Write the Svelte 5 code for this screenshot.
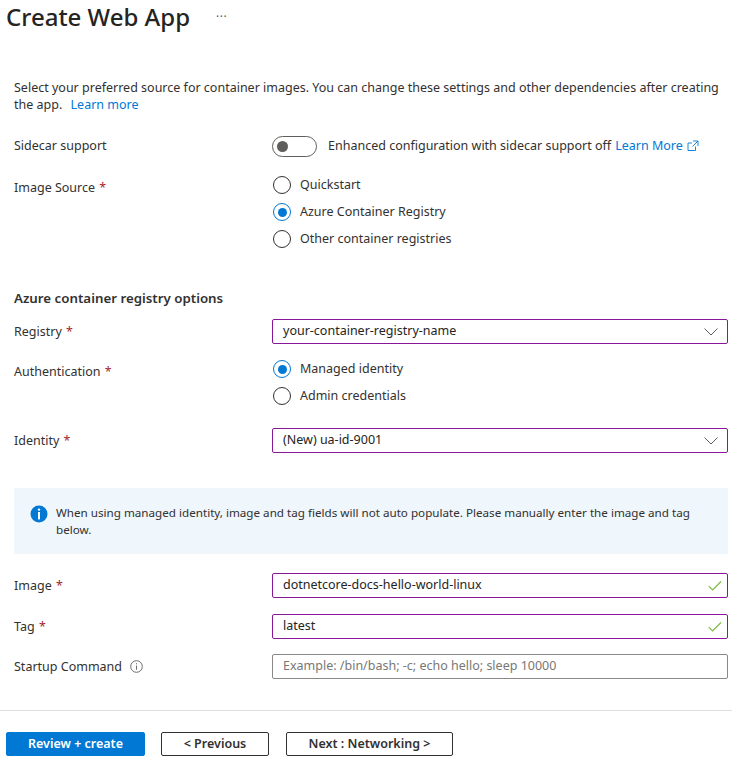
<script>
	const imageSources = [
		{ label: 'Quickstart', checked: false },
		{ label: 'Azure Container Registry', checked: true },
		{ label: 'Other container registries', checked: false }
	];
	const authOptions = [
		{ label: 'Managed identity', checked: true },
		{ label: 'Admin credentials', checked: false }
	];
</script>

{#snippet radios(options)}
	<div class="radios">
		{#each options as option}
			<div class="radio">
				<span class="circle" class:checked={option.checked}></span>
				<span>{option.label}</span>
			</div>
		{/each}
	</div>
{/snippet}

{#snippet chevron()}
	<svg class="end-icon" width="14" height="8" viewBox="0 0 14 8" fill="none" stroke="#605e5c" stroke-width="1">
		<path d="M0.5 0.5 L7 7 L13.5 0.5" />
	</svg>
{/snippet}

{#snippet tick()}
	<svg class="end-icon tick" width="14" height="10" viewBox="0 0 14 10" fill="none" stroke="#7fba41" stroke-width="1.2">
		<path d="M0.8 5.2 L4.6 9 L13 0.5" />
	</svg>
{/snippet}

<div class="page">
	<header class="title">
		<h1>Create Web App</h1>
		<span class="more">···</span>
	</header>

	<p class="intro">
		Select your preferred source for container images. You can change these settings and other dependencies after creating
		the app. <a href="#top" class="learn">Learn more</a>
	</p>

	<div class="row sidecar">
		<span class="label">Sidecar support</span>
		<div class="toggle-line">
			<span class="toggle"><span class="knob"></span></span>
			<span>Enhanced configuration with sidecar support off</span>
			<a href="#top">Learn More</a>
			<svg width="12" height="12" viewBox="0 0 12 12" fill="none" stroke="#0078d4" stroke-width="0.9">
				<path d="M8.5 6.5 V10.5 H1 V3 H5 M6 1 H11 V6 M11 1 L5.5 6.5" />
			</svg>
		</div>
	</div>

	<div class="row source">
		<span class="label radio-label">Image Source <em>*</em></span>
		{@render radios(imageSources)}
	</div>

	<h2>Azure container registry options</h2>

	<div class="row registry">
		<span class="label">Registry <em>*</em></span>
		<div class="field edited">your-container-registry-name {@render chevron()}</div>
	</div>

	<div class="row auth">
		<span class="label radio-label">Authentication <em>*</em></span>
		{@render radios(authOptions)}
	</div>

	<div class="row identity">
		<span class="label">Identity <em>*</em></span>
		<div class="field edited">(New) ua-id-9001 {@render chevron()}</div>
	</div>

	<div class="notice">
		<svg width="18" height="18" viewBox="0 0 18 18">
			<circle cx="9" cy="9" r="8.5" fill="#0078d4" />
			<rect x="7.8" y="3.4" width="2.4" height="2.4" rx="1.2" fill="#fff" />
			<rect x="8" y="7" width="2" height="7.4" fill="#fff" />
		</svg>
		<p>When using managed identity, image and tag fields will not auto populate. Please manually enter the image and tag below.</p>
	</div>

	<div class="row image">
		<span class="label">Image <em>*</em></span>
		<div class="field edited">dotnetcore-docs-hello-world-linux {@render tick()}</div>
	</div>

	<div class="row tag">
		<span class="label">Tag <em>*</em></span>
		<div class="field edited">latest {@render tick()}</div>
	</div>

	<div class="row startup">
		<span class="label">
			Startup Command
			<svg class="info" width="13" height="13" viewBox="0 0 13 13" fill="none" stroke="#605e5c" stroke-width="0.9">
				<circle cx="6.5" cy="6.5" r="5.8" />
				<path d="M6.5 5.6 V9.8 M6.5 3.2 V4.3" />
			</svg>
		</span>
		<div class="field placeholder">Example: /bin/bash; -c; echo hello; sleep 10000</div>
	</div>

	<footer>
		<button class="primary">Review + create</button>
		<button class="previous">&lt; Previous</button>
		<button class="next">Next : Networking &gt;</button>
	</footer>
</div>

<style>
	:global(body) {
		background: #fff;
	}

	.page {
		height: 767px;
		box-sizing: border-box;
		overflow: hidden;
		font-family: 'Noto Sans', 'Open Sans', sans-serif;
		font-size: 12.5px;
		line-height: 18px;
		color: #323130;
	}

	.title {
		display: flex;
		align-items: center;
		gap: 26px;
		height: 34px;
		padding-left: 6px;
	}

	h1 {
		margin: 0;
		font-size: 24px;
		font-weight: 500;
		line-height: 34px;
		color: #252423;
	}

	.more {
		font-size: 12px;
		color: #605e5c;
		letter-spacing: 0.5px;
	}

	.intro {
		margin: 45px 0 0 14px;
		height: 36px;
		line-height: 17px;
	}

	a {
		color: #0078d4;
		text-decoration: none;
	}

	.learn {
		margin-left: 5px;
	}

	.row {
		display: grid;
		grid-template-columns: 258px 456px;
		margin-left: 14px;
		align-items: center;
	}

	.label em {
		color: #a4262c;
		font-style: normal;
		margin-left: 1px;
	}

	.sidecar {
		margin-top: 20px;
		height: 22px;
	}

	.toggle-line {
		display: flex;
		align-items: center;
		gap: 4px;
	}

	.toggle {
		width: 45px;
		height: 21px;
		box-sizing: border-box;
		border: 1px solid #605e5c;
		border-radius: 11px;
		margin-right: 7px;
		display: flex;
		align-items: center;
		padding-left: 4px;
	}

	.knob {
		width: 11px;
		height: 11px;
		border-radius: 50%;
		background: #605e5c;
	}

	.source {
		margin-top: 19px;
		align-items: start;
	}

	.radio-label {
		margin-top: 3px;
	}

	.radios {
		display: flex;
		flex-direction: column;
		gap: 9px;
	}

	.radio {
		display: flex;
		align-items: center;
		gap: 9px;
		height: 18px;
		padding-left: 1px;
	}

	.circle {
		width: 18px;
		height: 18px;
		box-sizing: border-box;
		border: 1px solid #323130;
		border-radius: 50%;
		position: relative;
	}

	.circle.checked {
		border-color: #0078d4;
	}

	.circle.checked::after {
		content: '';
		position: absolute;
		inset: 3.5px;
		border-radius: 50%;
		background: #0078d4;
	}

	h2 {
		margin: 41px 14px 0;
		font-size: 13.3px;
		font-weight: 600;
		line-height: 18px;
		color: #323130;
	}

	.registry {
		margin-top: 12px;
	}

	.auth {
		margin-top: 16px;
		align-items: start;
	}

	.identity {
		margin-top: 23px;
	}

	.field {
		height: 25px;
		box-sizing: border-box;
		border: 1px solid #8a8886;
		border-radius: 2px;
		padding: 0 10px;
		display: flex;
		align-items: center;
		justify-content: space-between;
		line-height: 1;
	}

	.edited {
		border: 1.5px solid #881798;
		color: #252423;
	}

	.placeholder {
		color: #797775;
	}

	.end-icon {
		margin-right: -1px;
	}

	.tick {
		margin-right: -5px;
	}

	.notice {
		margin: 35px 4px 0 14px;
		height: 66px;
		box-sizing: border-box;
		background: #eff6fc;
		padding: 16px 34px 0 16px;
		display: flex;
		gap: 8px;
		align-items: flex-start;
	}

	.notice svg {
		flex: none;
		margin-top: 1px;
	}

	.notice p {
		margin: 0;
		font-size: 11.65px;
		line-height: 17px;
	}

	.image {
		margin-top: 19px;
	}

	.tag {
		margin-top: 16px;
	}

	.startup {
		margin-top: 15px;
	}

	.info {
		margin-left: 5px;
		vertical-align: -2px;
	}

	footer {
		margin-top: 31px;
		border-top: 1px solid #e1dfdd;
		padding: 21px 0 0 6px;
		display: flex;
	}

	button {
		height: 24px;
		box-sizing: border-box;
		font-family: inherit;
		font-size: 12.5px;
		font-weight: 600;
		line-height: 1;
		border-radius: 2px;
		border: 1px solid #323130;
		background: #fff;
		color: #323130;
		padding: 0;
	}

	.primary {
		width: 139px;
		background: #0078d4;
		border-color: #0078d4;
		color: #fff;
	}

	.previous {
		width: 108px;
		margin-left: 16px;
	}

	.next {
		width: 167px;
		margin-left: 17px;
	}
</style>
